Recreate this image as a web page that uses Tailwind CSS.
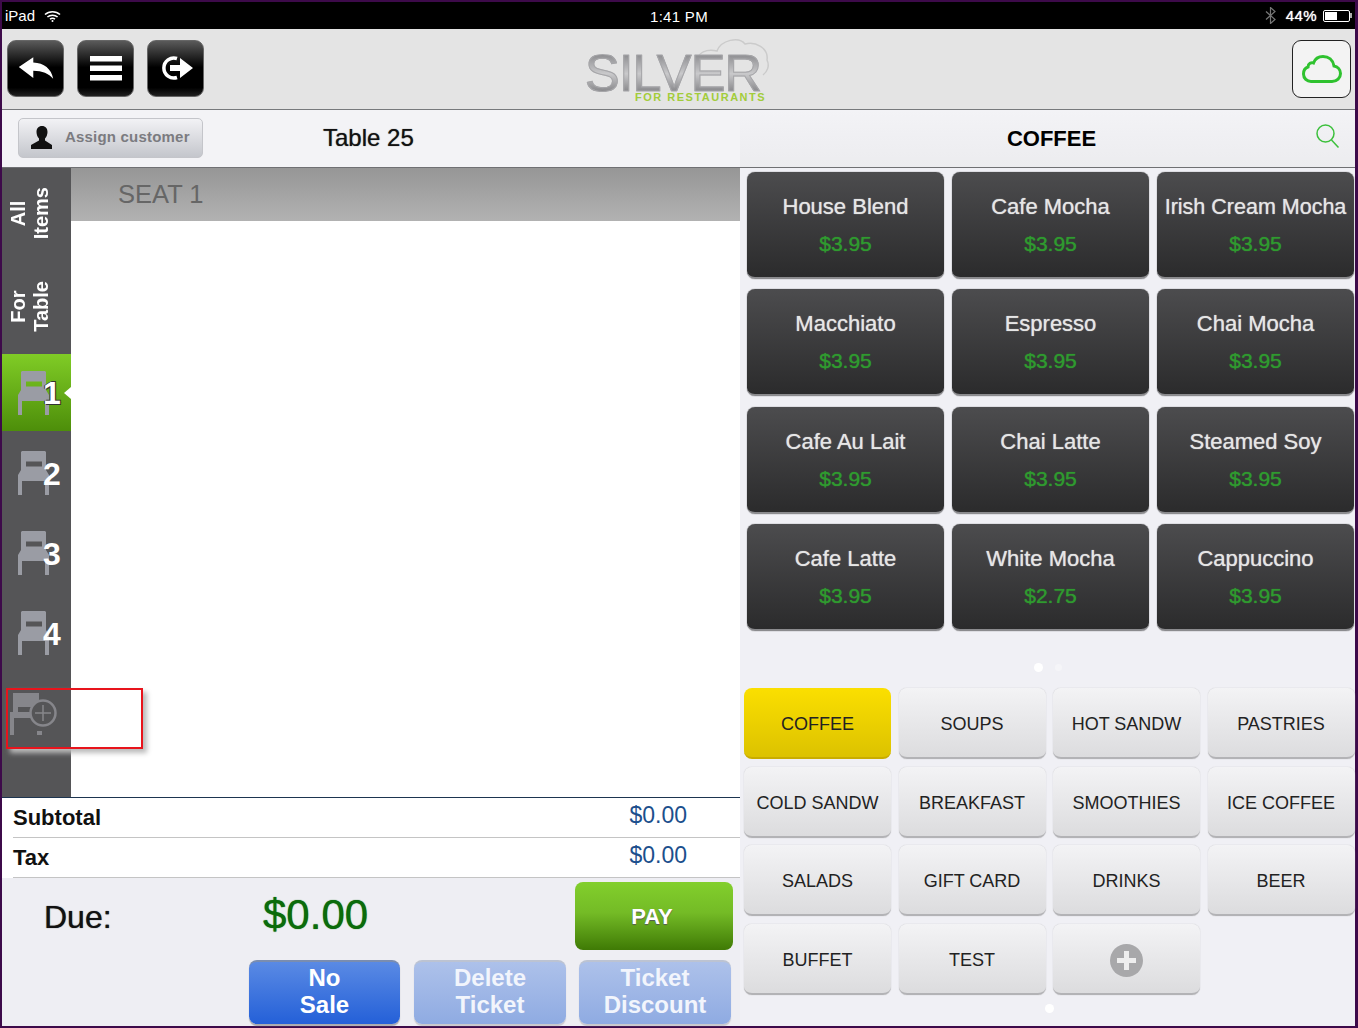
<!DOCTYPE html>
<html lang="en">
<head>
    <meta charset="UTF-8">
    <title>Silver POS</title>
    <script src="https://cdn.jsdelivr.net/npm/@tailwindcss/browser@4"></script>
</head>
<body class="bg-[#3d0a4a]">
<div class="relative flex flex-col w-[1358px] h-[1028px] overflow-hidden pt-[2px] pl-[2px] pr-[3px] pb-[2px] bg-[#3d0a4a] font-['Liberation_Sans',Arial,sans-serif]">

    <!-- status bar -->
    <div class="relative flex items-center justify-between h-[27px] shrink-0 bg-black text-white text-[15px] pl-[3px] pr-[3px]">
        <div class="flex items-center gap-[9px]">
            <span class="mt-[2px]">iPad</span>
            <svg width="17" height="12" viewBox="0 0 17 12" fill="none" stroke="#fff" stroke-width="1.6"><path d="M1 4.500C5 .8 12 .8 16 4.500M3.400 7C6.200 4.600 10.800 4.600 13.600 7M6 9.200C7.400 8.200 9.600 8.200 11 9.200"/><circle cx="8.500" cy="11" r="1" fill="#fff" stroke="none"/></svg>
        </div>
        <span class="absolute left-[648px] top-[4px] tracking-[0.3px]">1:41 PM</span>
        <div class="flex items-center gap-[6px]">
            <svg class="mr-[4px]" width="11" height="17" viewBox="0 0 11 17" fill="none" stroke="#777" stroke-width="1.2"><path d="M1 4.500l9 8-4.500 4V.5l4.500 4-9 8"/></svg>
            <span class="mt-[2px] tracking-[0.4px] [text-shadow:0_0_1px_#fff]">44%</span>
            <div class="flex items-center">
                <div class="w-[27px] h-[12px] border border-white rounded-[2px] p-[1px]"><div class="w-[12px] h-full bg-white"></div></div>
                <div class="w-[2px] h-[5px] bg-[#aaa]"></div>
            </div>
        </div>
    </div>

    <!-- toolbar -->
    <div class="relative flex items-center justify-between h-[81px] shrink-0 bg-[#e4e4e4] border-b border-[#77797c] pl-[5px] pr-[4px]">
        <div class="flex mt-[-2px]">
            <button class="flex items-center justify-center w-[57px] h-[57px] rounded-[9px] border border-[#666] bg-[linear-gradient(#5a5a5a,#000_48%,#000_85%,#222)]">
                <svg width="38" height="24" viewBox="0 0 42 26" fill="#fff"><path d="M2 12 18 1v6c12 .5 20 7 22 18-5-6-12-9-22-9v8z"/></svg>
            </button>
            <button class="flex items-center justify-center ml-[13px] w-[57px] h-[57px] rounded-[9px] border border-[#666] bg-[linear-gradient(#5a5a5a,#000_48%,#000_85%,#222)]">
                <svg width="32" height="25" viewBox="0 0 32 25" fill="#fff"><rect width="32" height="5.500"/><rect y="9.500" width="32" height="5.500"/><rect y="19" width="32" height="5.500"/></svg>
            </button>
            <button class="flex items-center justify-center ml-[13px] w-[57px] h-[57px] rounded-[9px] border border-[#666] bg-[linear-gradient(#5a5a5a,#000_48%,#000_85%,#222)]">
                <svg width="38" height="32" viewBox="0 0 38 32" fill="none"><path d="M20 6.500A10 10 0 1 0 20 25.500" stroke="#fff" stroke-width="3.500"/><path d="M13 13h10V6l13 10-13 10v-7H13z" fill="#fff"/></svg>
            </button>
        </div>
        <div class="absolute left-[581px] top-[7px] w-[195px] h-[70px]">
            <svg class="absolute left-[112px] top-0" width="80" height="45" viewBox="0 0 80 45" fill="none" stroke="#cbcbcb" stroke-width="1.500"><path d="M1 24C6 12 18 14 22 15 26 4 44 0 50 8c10-3 24 4 22 16 3 6 0 12-4 15"/></svg>
            <span class="absolute left-[2px] top-[19px] text-[52px] leading-[36px] tracking-[-0.8px] text-transparent [-webkit-text-stroke:1px_#a6a6a9] bg-clip-text bg-[linear-gradient(#8f8f92,#c9c9cb_52%,#8a8a8d)]">SILVER</span>
            <span class="absolute left-[52px] top-[55px] text-[11px] leading-[12px] font-bold tracking-[1.500px] text-[#a2cc3a]">FOR RESTAURANTS</span>
        </div>
        <button class="flex items-center justify-center w-[59px] h-[58px] mt-[-1px] rounded-[9px] border border-[#222] bg-[#f3f3f3]">
            <svg width="40" height="28" viewBox="0 0 40 28" fill="none" stroke="#2fc22f" stroke-width="3"><path d="M9 26.500H30c5 0 8.500-3.500 8.500-8 0-4-3-7-6.500-7.500C31 5 26.500 1.500 21 1.500c-4.500 0-8 2.500-9.500 6.500C9.500 7 6 8.500 6 12 3 13 1.500 16 1.500 19c0 4.500 3.500 7.500 7.500 7.500z"/></svg>
        </button>
    </div>

    <!-- sub header -->
    <div class="flex h-[58px] shrink-0 border-b border-[#6f7073]">
        <div class="flex items-center w-[738px] bg-[#f3f3f6] pl-[16px] pb-[2px]">
            <button class="flex items-center w-[185px] h-[40px] rounded-[5px] border border-[#c4c5ca] bg-[linear-gradient(#f2f2f5,#c4c6cc)] pl-[12px] gap-[12px]">
                <svg width="22" height="23" viewBox="0 0 22 23" fill="#111"><path d="M11 0c3.500 0 5.500 2.500 5.500 6 0 2.500-1 5-2.500 6.500v2L21 19v4H0v-4l8-4.500v-2C6.500 11 5.500 8.500 5.500 6 5.500 2.500 7.500 0 11 0z"/></svg>
                <span class="text-[15px] font-bold tracking-[0.2px] text-[#7b7b80]">Assign customer</span>
            </button>
            <span class="ml-[120px] text-[24px] text-[#111] [text-shadow:0_0_1px_#555]">Table 25</span>
        </div>
        <div class="relative flex flex-1 items-center justify-center pl-[8px] bg-[linear-gradient(#f3f3f6,#ececef)]">
            <span class="text-[22px] font-bold text-black">COFFEE</span>
            <svg class="absolute right-[14px] top-[13px]" width="26" height="26" viewBox="0 0 26 26" fill="none" stroke="#3cc03c" stroke-width="1.500"><circle cx="10.500" cy="10.500" r="8.500"/><path d="M16.500 17 23.500 24.500"/></svg>
        </div>
    </div>

    <!-- main -->
    <div class="flex flex-1 min-h-0">
        <div class="flex flex-col w-[738px] shrink-0 bg-[#eeeef3]">
            <div class="flex h-[629px] shrink-0">
                <!-- sidebar -->
                <div class="flex flex-col w-[69px] shrink-0 bg-[#555557] text-white">
                    <div class="flex items-center justify-center h-[90px] pr-[14px]">
                        <span class="[writing-mode:vertical-rl] rotate-180 text-center text-[20px] leading-[23px] font-bold">All<br>Items</span>
                    </div>
                    <div class="flex items-center justify-center h-[96px] pr-[14px]">
                        <span class="[writing-mode:vertical-rl] rotate-180 text-center text-[20px] leading-[23px] font-bold">For<br>Table</span>
                    </div>
                    <div class="relative flex items-center h-[77px] pl-[16px] bg-[linear-gradient(#80cc26,#4d8e0a)]">
                        <svg width="31" height="44" viewBox="0 0 31 44" fill="#9a9ca4" fill-rule="evenodd"><path d="M4 0h23l1 1v18l3 5v20h-4V30H4v14H0V24l3-5V1zM8 10.500v5h16v-5z"/></svg>
                        <span class="absolute left-[41px] top-[21px] text-[32px] leading-[36px] font-bold [text-shadow:1px_1px_0_#333,-1px_0_0_#333,1px_-1px_0_#333]">1</span>
                        <div class="absolute right-0 top-[33px] w-0 h-0 border-y-[6px] border-y-transparent border-r-[7px] border-r-white"></div>
                    </div>
                    <div class="relative flex items-center h-[80px] pl-[16px] mt-[2px]">
                        <svg width="31" height="44" viewBox="0 0 31 44" fill="#9a9ca4" fill-rule="evenodd"><path d="M4 0h23l1 1v18l3 5v20h-4V30H4v14H0V24l3-5V1zM8 10.500v5h16v-5z"/></svg>
                        <span class="absolute left-[41px] top-[23px] text-[32px] leading-[36px] font-bold">2</span>
                    </div>
                    <div class="relative flex items-center h-[80px] pl-[16px]">
                        <svg width="31" height="44" viewBox="0 0 31 44" fill="#9a9ca4" fill-rule="evenodd"><path d="M4 0h23l1 1v18l3 5v20h-4V30H4v14H0V24l3-5V1zM8 10.500v5h16v-5z"/></svg>
                        <span class="absolute left-[41px] top-[23px] text-[32px] leading-[36px] font-bold">3</span>
                    </div>
                    <div class="relative flex items-center h-[80px] pl-[16px]">
                        <svg width="31" height="44" viewBox="0 0 31 44" fill="#9a9ca4" fill-rule="evenodd"><path d="M4 0h23l1 1v18l3 5v20h-4V30H4v14H0V24l3-5V1zM8 10.500v5h16v-5z"/></svg>
                        <span class="absolute left-[41px] top-[23px] text-[32px] leading-[36px] font-bold">4</span>
                    </div>
                    <div class="flex items-center h-[80px] pl-[8px]">
                        <svg width="50" height="44" viewBox="0 0 50 44" fill="none"><path d="M3 2h26v14H8v5h17v6H4v17H0V21h3z" fill="#86868b"/><circle cx="33" cy="22" r="12.500" fill="#555557" stroke="#86868b" stroke-width="2.500"/><path d="M33 14v16M25 22h16" stroke="#86868b" stroke-width="1.500"/><rect x="27" y="40" width="5" height="4" fill="#86868b"/></svg>
                    </div>
                </div>
                <!-- seat ticket -->
                <div class="flex-1 flex flex-col bg-white">
                    <div class="flex items-center h-[53px] pl-[47px] text-[25.500px] text-[#666] bg-[linear-gradient(#969696,#b2b2b2)]">SEAT 1</div>
                </div>
            </div>

            <!-- totals -->
            <div class="bg-white border-t border-[#1d3550] pl-[11px]">
                <div class="flex items-center justify-between h-[40px] border-b border-[#c4c4c4] pr-[53px]">
                    <span class="text-[22px] leading-[38px] font-bold text-[#111] mt-[1px]">Subtotal</span>
                    <span class="text-[23px] text-[#1c4f8c] mt-[-5px]">$0.00</span>
                </div>
                <div class="flex items-center justify-between h-[40px] border-b border-[#c4c4c4] pr-[53px]">
                    <span class="text-[22px] font-bold text-[#111]">Tax</span>
                    <span class="text-[23px] text-[#1c4f8c] mt-[-5px]">$0.00</span>
                </div>
            </div>
            <div class="relative flex-1">
                <span class="absolute left-[42px] top-[19px] text-[32px] leading-[40px] text-[#111] [text-shadow:0_0_1px_#333]">Due:</span>
                <span class="absolute left-[261px] top-[12px] text-[42px] leading-[50px] text-[#0b6b0b] [text-shadow:0_0_1px_#0b6b0b]">$0.00</span>
                <button class="absolute left-[573px] top-[4px] w-[158px] h-[68px] pr-[4px] rounded-[8px] text-white text-[22px] font-bold bg-[linear-gradient(#82cf2c,#74bb26_45%,#3f7a05)] [text-shadow:0_1px_1px_#555]">PAY</button>
                <div class="absolute left-[247px] top-[82px] flex">
                    <button class="w-[151px] h-[64px] pb-[5px] rounded-[8px] text-white text-[24px] leading-[27px] font-bold border-t-2 border-[#7a8db0] bg-[linear-gradient(#5a8ae4,#2460d8)] shadow-[0_2px_1px_#a9a9ad]">No<br>Sale</button>
                    <button class="ml-[14px] w-[152px] h-[64px] pb-[5px] rounded-[8px] text-[#f2f5fc] text-[24px] leading-[27px] font-bold border-t-2 border-[#bcc3d2] bg-[linear-gradient(#adc1ea,#8fabe2)] shadow-[0_2px_1px_#c8c8cc]">Delete<br>Ticket</button>
                    <button class="ml-[13px] w-[152px] h-[64px] pb-[5px] rounded-[8px] text-[#f2f5fc] text-[24px] leading-[27px] font-bold border-t-2 border-[#bcc3d2] bg-[linear-gradient(#adc1ea,#8fabe2)] shadow-[0_2px_1px_#c8c8cc]">Ticket<br>Discount</button>
                </div>
            </div>
        </div>

        <!-- menu -->
        <div class="relative flex-1 bg-[#f0f0f5]">
            <div id="products" class="grid grid-cols-[197px_197px_197px] gap-x-[8px] gap-y-[10.400px] pl-[7px] pt-[4px]"></div>
            <div class="absolute left-[294px] top-[495px] w-[9px] h-[9px] rounded-full bg-white"></div>
            <div class="absolute left-[315px] top-[496px] w-[7px] h-[7px] rounded-full bg-[#f5f5f8]"></div>
            <div id="categories" class="absolute left-[4px] top-[520px] grid grid-cols-[147px_147px_147px_147px] gap-x-[7.500px] gap-y-[7.500px]"></div>
            <div class="absolute left-[305px] top-[836px] w-[9px] h-[9px] rounded-full bg-white"></div>
        </div>
    </div>

    <!-- highlight box drawn on the screenshot -->
    <div class="absolute left-[6px] top-[688px] w-[137px] h-[61px] border-2 border-[#e8141c] shadow-[4px_4px_5px_#bbb]"></div>
</div>

<script>
    const products = [
        ['House Blend', '$3.95'], ['Cafe Mocha', '$3.95'], ['Irish Cream Mocha', '$3.95'],
        ['Macchiato', '$3.95'], ['Espresso', '$3.95'], ['Chai Mocha', '$3.95'],
        ['Cafe Au Lait', '$3.95'], ['Chai Latte', '$3.95'], ['Steamed Soy', '$3.95'],
        ['Cafe Latte', '$3.95'], ['White Mocha', '$2.75'], ['Cappuccino', '$3.95']
    ];
    document.getElementById('products').innerHTML = products.map(([name, price]) => `
        <button class="flex flex-col items-center h-[107px] rounded-[8px] border-b-2 border-[#8b8b8e] bg-[linear-gradient(#4c4c4e,#2b2b2c)] shadow-[0_0_1px_#333]">
            <span class="mt-[22px] ${name.length > 15 ? 'text-[21.500px]' : 'text-[22px]'} leading-[26px] whitespace-nowrap text-[#e6e6e6] [text-shadow:0_0_1px_#ccc]">${name}</span>
            <span class="mt-[12px] text-[21px] leading-[24px] text-[#2f9a2f] [text-shadow:0_0_1px_#2f9a2f]">${price}</span>
        </button>`).join('');

    const categories = ['COFFEE', 'SOUPS', 'HOT SANDW', 'PASTRIES', 'COLD SANDW', 'BREAKFAST', 'SMOOTHIES', 'ICE COFFEE', 'SALADS', 'GIFT CARD', 'DRINKS', 'BEER', 'BUFFET', 'TEST'];
    const catClass = 'flex items-center justify-center h-[71px] pt-[4px] rounded-[8px] text-[18px] text-[#222] border-b-2';
    document.getElementById('categories').innerHTML = categories.map((name, i) => `
        <button class="${catClass} ${i === 0 ? 'border-[#c9ac00] bg-[linear-gradient(#fbdf00,#dcc200)]' : 'border-[#b3b3b6] bg-[linear-gradient(#f3f3f5,#dcdcde)] shadow-[0_0_1px_#aaa]'}">${name}</button>`).join('') + `
        <button class="${catClass} border-[#b3b3b6] bg-[linear-gradient(#f3f3f5,#dcdcde)] shadow-[0_0_1px_#aaa]">
            <svg width="33" height="33" viewBox="0 0 33 33"><circle cx="16.500" cy="16.500" r="16.500" fill="#a8a8aa"/><path d="M14 7h5v7h7v5h-7v7h-5v-7H7v-5h7z" fill="#eee"/></svg>
        </button>`;
</script>
</body>
</html>
